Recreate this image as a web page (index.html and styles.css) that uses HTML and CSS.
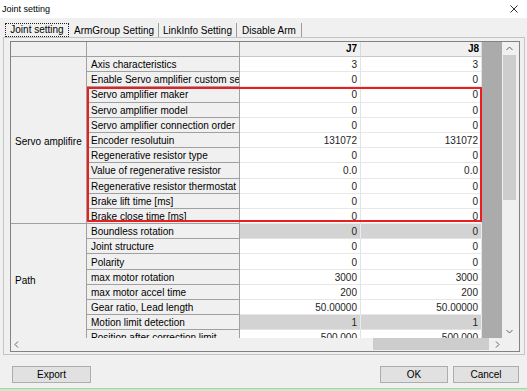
FILE: index.html
```html
<!DOCTYPE html>
<html lang="en">
<head>
    <title>Joint setting</title>
    <link rel="stylesheet" href="styles.css">
</head>
<body>
<div class="window">
    <div class="titlebar">
        <span>Joint setting</span>
        <svg class="close" width="8" height="8" viewBox="0 0 8 8">
            <path d="M0.5 0.5 L7.5 7.5 M7.5 0.5 L0.5 7.5" stroke="#333" stroke-width="1" fill="none"/>
        </svg>
    </div>

    <!-- tab strip -->
    <div class="tabs">
        <div class="tab tab_joint"><span class="focus">Joint setting</span></div>
        <div class="tab tab_arm">ArmGroup Setting</div>
        <div class="tab tab_link">LinkInfo Setting</div>
        <div class="tab tab_disable">Disable Arm</div>
    </div>

    <div class="panel">
        <div class="grid">
            <div class="grid_top">
                <div class="view">
                    <div class="table">
                        <div class="hd"></div>
                        <div class="hd"></div>
                        <div class="hd j">J7</div>
                        <div class="hd j j8">J8</div>

                        <div class="grp grp_servo">Servo amplifire</div>
                        <div class="name">Axis characteristics</div>
                        <div class="val">3</div>
                        <div class="val">3</div>
                        <div class="name">Enable Servo amplifier custom setting</div>
                        <div class="val">0</div>
                        <div class="val">0</div>
                        <div class="name">Servo amplifier maker</div>
                        <div class="val">0</div>
                        <div class="val">0</div>
                        <div class="name">Servo amplifier model</div>
                        <div class="val">0</div>
                        <div class="val">0</div>
                        <div class="name">Servo amplifier connection order</div>
                        <div class="val">0</div>
                        <div class="val">0</div>
                        <div class="name">Encoder resolutuin</div>
                        <div class="val">131072</div>
                        <div class="val">131072</div>
                        <div class="name">Regenerative resistor type</div>
                        <div class="val">0</div>
                        <div class="val">0</div>
                        <div class="name">Value of regenerative resistor</div>
                        <div class="val">0.0</div>
                        <div class="val">0.0</div>
                        <div class="name">Regenerative resistor thermostat</div>
                        <div class="val">0</div>
                        <div class="val">0</div>
                        <div class="name">Brake lift time [ms]</div>
                        <div class="val">0</div>
                        <div class="val">0</div>
                        <div class="name">Brake close time [ms]</div>
                        <div class="val">0</div>
                        <div class="val">0</div>

                        <div class="grp grp_path">Path</div>
                        <div class="name">Boundless rotation</div>
                        <div class="val sel">0</div>
                        <div class="val sel">0</div>
                        <div class="name">Joint structure</div>
                        <div class="val">0</div>
                        <div class="val">0</div>
                        <div class="name">Polarity</div>
                        <div class="val">0</div>
                        <div class="val">0</div>
                        <div class="name">max motor rotation</div>
                        <div class="val">3000</div>
                        <div class="val">3000</div>
                        <div class="name">max motor accel time</div>
                        <div class="val">200</div>
                        <div class="val">200</div>
                        <div class="name">Gear ratio, Lead length</div>
                        <div class="val">50.00000</div>
                        <div class="val">50.00000</div>
                        <div class="name">Motion limit detection</div>
                        <div class="val sel">1</div>
                        <div class="val sel">1</div>
                        <div class="name">Position after correction limit</div>
                        <div class="val">500.000</div>
                        <div class="val">500.000</div>
                        <div class="name">Position before correction limit</div>
                        <div class="val">500.000</div>
                        <div class="val">500.000</div>
                    </div>
                    <!-- red marker over the servo rows -->
                    <div class="highlight"></div>
                </div>
                <div class="vscroll">
                    <div class="arrow_v">
                        <svg width="7" height="5" viewBox="0 0 7 5"><path d="M0.5 4 L3.5 1 L6.5 4" stroke="#606060" fill="none"/></svg>
                    </div>
                    <div class="vthumb"></div>
                    <div class="vspace"></div>
                    <div class="arrow_v">
                        <svg width="7" height="5" viewBox="0 0 7 5"><path d="M0.5 1 L3.5 4 L6.5 1" stroke="#606060" fill="none"/></svg>
                    </div>
                </div>
            </div>
            <div class="hscroll_row">
                <div class="hscroll">
                    <div class="arrow_h">
                        <svg width="5" height="7" viewBox="0 0 5 7"><path d="M4 0.5 L1 3.5 L4 6.5" stroke="#606060" fill="none"/></svg>
                    </div>
                    <div class="htrack"><div class="hthumb"></div></div>
                    <div class="arrow_h">
                        <svg width="5" height="7" viewBox="0 0 5 7"><path d="M1 0.5 L4 3.5 L1 6.5" stroke="#606060" fill="none"/></svg>
                    </div>
                </div>
                <div class="corner"></div>
            </div>
        </div>
    </div>

    <div class="footer">
        <button type="button" class="btn btn_export">Export</button>
        <div class="spacer"></div>
        <button type="button" class="btn btn_ok">OK</button>
        <button type="button" class="btn btn_cancel">Cancel</button>
    </div>
    <div class="strip"></div>
</div>
</body>
</html>
```

FILE: styles.css
```css
* {
    box-sizing: border-box;
}

body {
    margin: 0;
    background-color: #f0f0f0;
    font-family: "Liberation Sans", Arial, sans-serif;
    font-size: 10px;
    color: #000;
}

.window {
    width: 527px;
    height: 391px;
    display: flex;
    flex-direction: column;
    overflow: hidden;
}

.titlebar {
    height: 18px;
    flex: none;
    background-color: #fff;
    display: flex;
    align-items: center;
    justify-content: space-between;
    padding: 0 9px 0 2px;
    font-size: 9px;
}

.close {
    display: block;
}

/* tabs */
.tabs {
    height: 19px;
    flex: none;
    display: flex;
    padding-left: 3px;
}

.tab {
    margin-top: 5px;
    height: 14px;
    display: flex;
    align-items: center;
    justify-content: center;
    border-right: 1px solid #9c9c9c;
    white-space: nowrap;
}

.tab_joint {
    width: 67px;
    margin-top: 4px;
    height: 15px;
    border-right: none;
    justify-content: flex-start;
    padding-left: 2px;
}

.focus {
    display: flex;
    align-items: center;
    justify-content: center;
    width: 64px;
    height: 14px;
    border: 1px dotted #222;
}

.tab_arm {
    width: 89px;
}

.tab_link {
    width: 78px;
}

.tab_disable {
    width: 65px;
}

/* tab page */
.panel {
    flex: none;
    width: 522px;
    height: 318px;
    margin-left: 3px;
    border: 1px solid #c4c4c4;
    padding: 3px 4px 0 6px;
}

.grid {
    width: 510px;
    height: 311px;
    border: 1px solid #828282;
    display: flex;
    flex-direction: column;
}

.grid_top {
    display: flex;
    height: 296px;
}

.view {
    position: relative;
    width: 491px;
    height: 296px;
    background-color: #ababab;
    overflow: hidden;
}

.table {
    display: grid;
    grid-template-columns: 76px 153px 121px 121px;
    grid-template-rows: 15px;
    grid-auto-rows: 15.2px;
    width: 471px;
}

.hd {
    background-color: #f0f0f0;
    border-right: 1px solid #a0a0a0;
    border-bottom: 1px solid #a0a0a0;
}

.hd.j {
    font-weight: bold;
    text-align: right;
    padding-right: 3px;
    line-height: 14px;
    border-right-color: #dadada;
    border-bottom-color: #c8c8c8;
}

.hd.j8 {
    padding-right: 2px;
}

.grp {
    background-color: #f0f0f0;
    border-right: 1px solid #a0a0a0;
    border-bottom: 1px solid #a0a0a0;
    display: flex;
    align-items: center;
    padding-left: 4px;
    white-space: nowrap;
}

.grp_servo {
    grid-row: span 11;
    padding-top: 2px;
}

.grp_path {
    grid-row: span 9;
    padding-bottom: 22px;
}

.name {
    background-color: #f0f0f0;
    border-right: 1px solid #a0a0a0;
    border-bottom: 1px solid #a0a0a0;
    display: flex;
    align-items: center;
    padding: 1px 0 0 4px;
    white-space: nowrap;
    overflow: hidden;
}

.val {
    background-color: #fff;
    border-right: 1px solid #e4e4e4;
    border-bottom: 1px solid #e8e8e8;
    display: flex;
    align-items: center;
    justify-content: flex-end;
    padding: 1px 3px 0 0;
    color: #1e1e1e;
}

.val.sel {
    background-color: #d3d3d3;
    border-right-color: #ececec;
    border-bottom-color: #e2e2e2;
}

.highlight {
    position: absolute;
    left: 76px;
    top: 45px;
    width: 395px;
    height: 135px;
    border: 2px solid #ee1c1c;
}

/* scrollbars */
.vscroll {
    width: 17px;
    height: 296px;
    display: flex;
    flex-direction: column;
    background-color: #f0f0f0;
}

.arrow_v {
    height: 13px;
    display: flex;
    align-items: center;
    justify-content: center;
    padding-right: 3px;
}

.arrow_v svg,
.arrow_h svg {
    display: block;
}

.vthumb {
    width: 13px;
    height: 145px;
    margin-left: 1px;
    background-color: #cdcdcd;
}

.vspace {
    flex: 1;
}

.hscroll_row {
    display: flex;
    height: 13px;
}

.hscroll {
    width: 491px;
    display: flex;
    background-color: #f0f0f0;
}

.arrow_h {
    width: 10px;
    display: flex;
    align-items: center;
    justify-content: center;
}

.htrack {
    flex: 1;
    padding-left: 352px;
}

.hthumb {
    width: 116px;
    height: 12px;
    background-color: #cdcdcd;
}

.corner {
    width: 17px;
    background-color: #f0f0f0;
}

/* buttons */
.footer {
    height: 33px;
    flex: none;
    display: flex;
    align-items: flex-start;
    padding: 11px 8px 0 12px;
}

.spacer {
    flex: 1;
}

.btn {
    height: 17px;
    border: 1px solid #adadad;
    background-color: #e1e1e1;
    font-family: "Liberation Sans", Arial, sans-serif;
    font-size: 10px;
    color: #000;
    padding: 0;
}

.btn_export {
    width: 79px;
}

.btn_ok {
    width: 68px;
    margin-right: 5px;
}

.btn_cancel {
    width: 66px;
}

.strip {
    height: 3px;
    flex: none;
    background-color: #cfe5cf;
    border-top: 1px solid #a9d2a9;
}
```
